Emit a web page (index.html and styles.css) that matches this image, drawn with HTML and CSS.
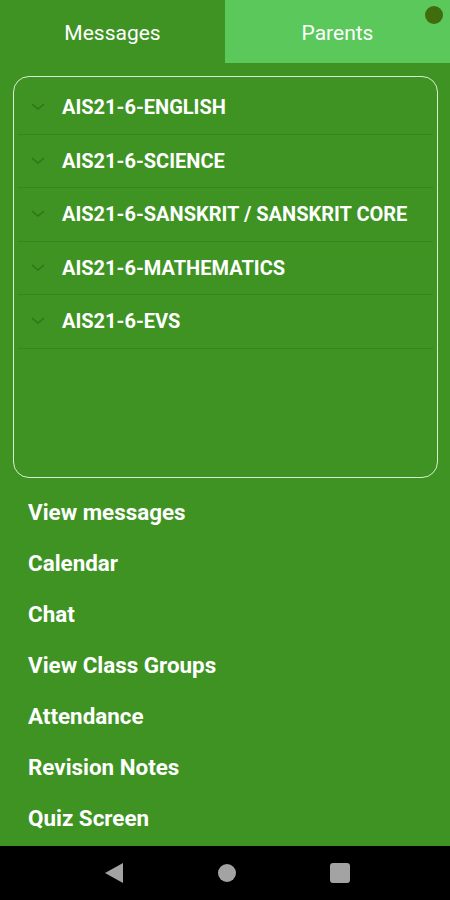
FILE: index.html
```html
<!DOCTYPE html>
<html lang="en">
<head>
  <meta charset="UTF-8" />
  <meta name="viewport" content="width=device-width, initial-scale=1" />
  <title>Messages</title>
  <link rel="stylesheet" href="styles.css">
</head>
<body>
  <div class="tabs">
    <div class="tab active">Messages</div>
    <div class="tab">Parents</div>
    <span class="dot"></span>
  </div>

  <div class="groups">
    <div class="group"><svg class="chev" viewBox="0 0 14 8"><path d="M1 1l6 5 6-5" /></svg>AIS21-6-ENGLISH</div>
    <div class="group"><svg class="chev" viewBox="0 0 14 8"><path d="M1 1l6 5 6-5" /></svg>AIS21-6-SCIENCE</div>
    <div class="group"><svg class="chev" viewBox="0 0 14 8"><path d="M1 1l6 5 6-5" /></svg>AIS21-6-SANSKRIT / SANSKRIT CORE</div>
    <div class="group"><svg class="chev" viewBox="0 0 14 8"><path d="M1 1l6 5 6-5" /></svg>AIS21-6-MATHEMATICS</div>
    <div class="group"><svg class="chev" viewBox="0 0 14 8"><path d="M1 1l6 5 6-5" /></svg>AIS21-6-EVS</div>
  </div>

  <ul class="menu">
    <li>View messages</li>
    <li>Calendar</li>
    <li>Chat</li>
    <li>View Class Groups</li>
    <li>Attendance</li>
    <li>Revision Notes</li>
    <li>Quiz Screen</li>
  </ul>

  <div class="navbar">
    <svg class="nav-icon" viewBox="0 0 20 22"><path d="M19 1v20L1 11z" /></svg>
    <span class="nav-home"></span>
    <span class="nav-recent"></span>
  </div>
</body>
</html>
```

FILE: styles.css
```css
html, body {
  margin: 0;
  height: 100%;
}
body {
  font-family: Roboto, 'Liberation Sans', sans-serif;
  background: #3e9323;
  color: #fff;
  display: flex;
  flex-direction: column;
  height: 900px;
  overflow: hidden;
}
.tabs {
  display: flex;
  height: 63px;
  position: relative;
}
.tab {
  flex: 1;
  display: flex;
  align-items: center;
  justify-content: center;
  font-size: 21px;
  padding-top: 3px;
  background: #5ac85a;
}
.tab.active {
  background: #3e9323;
}
.dot {
  position: absolute;
  top: 6px;
  right: 7px;
  width: 18px;
  height: 18px;
  border-radius: 50%;
  background: #3f6c0c;
}
.groups {
  margin: 13px 12px 0 13px;
  height: 402px;
  box-sizing: border-box;
  border: 1.5px solid #d8efd2;
  border-radius: 16px;
  padding: 4px 4px 0;
}
.group {
  display: flex;
  align-items: center;
  height: 52.5px;
  border-bottom: 1px solid #378520;
  font-weight: 700;
  font-size: 20px;
}
.chev {
  width: 14px;
  height: 8px;
  margin: 0 17px 0 13px;
  fill: none;
  stroke: #2f7519;
  stroke-width: 1.5;
}
.menu {
  list-style: none;
  margin: 9px 0 0;
  padding: 0 0 0 28px;
  flex: 1;
}
.menu li {
  height: 51px;
  line-height: 51px;
  font-size: 22.4px;
  font-weight: 700;
}
.navbar {
  height: 54px;
  background: #000;
  display: flex;
  align-items: center;
  justify-content: center;
  gap: 94px;
  padding-left: 3px;
}
.nav-icon {
  width: 20px;
  height: 22px;
  fill: #a3a3a3;
}
.nav-home {
  width: 18px;
  height: 18px;
  border-radius: 50%;
  background: #a3a3a3;
}
.nav-recent {
  width: 20px;
  height: 20px;
  border-radius: 3px;
  background: #a3a3a3;
}
```
